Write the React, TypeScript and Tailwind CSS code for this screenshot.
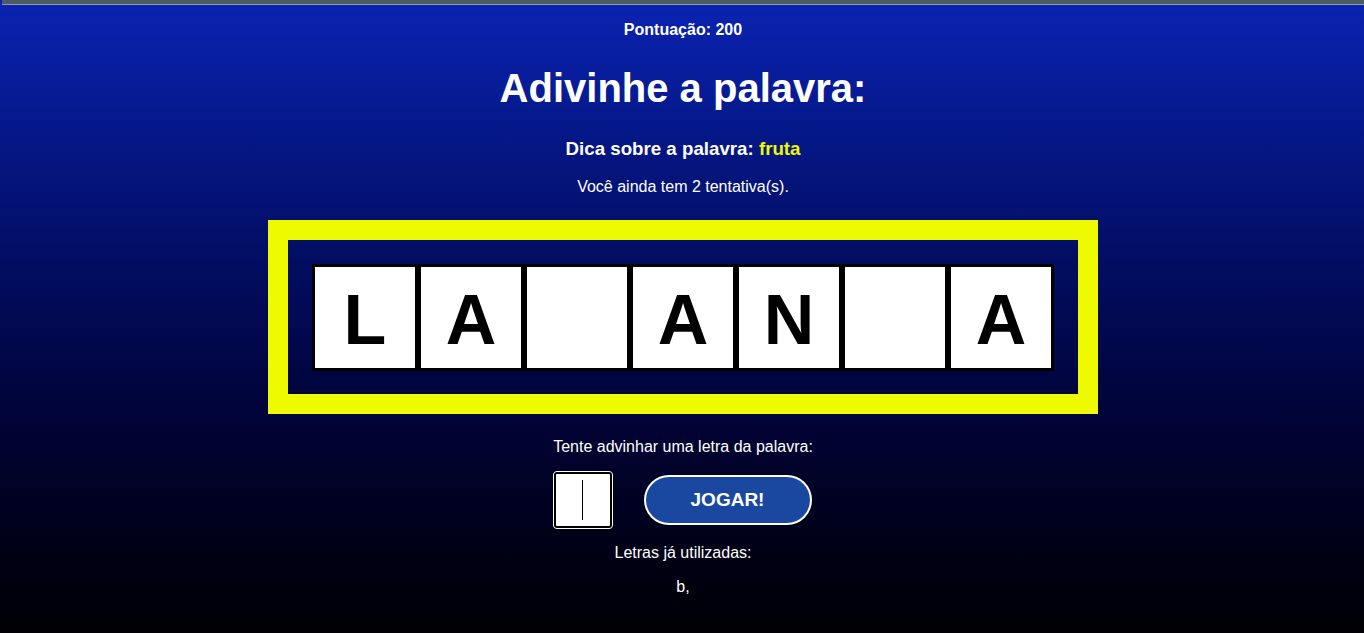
const letters = ["L", "A", "", "A", "N", "", "A"];

export default function App() {
  return (
    <div
      className="min-h-screen w-full pl-[2px] bg-gradient-to-b from-[#0a23b2] to-[#000005] text-white flex flex-col items-center"
      style={{ fontFamily: '"Liberation Sans", Arial, sans-serif' }}
    >
      <div className="w-full h-[4px] bg-[#4c5b63]" />
      <div className="w-full h-px bg-[#8d979c]" />

      <p className="mt-[16px] text-[16px] leading-[18px] font-bold">Pontuação: 200</p>

      <h1 className="mt-[26px] text-[40px] leading-[46px] font-bold">Adivinhe a palavra:</h1>

      <h3 className="mt-[27px] text-[18.72px] leading-[22px] font-bold">
        Dica sobre a palavra: <span className="text-[#eefa00]">fruta</span>
      </h3>

      <p className="mt-[18px] text-[16px] leading-[18px]">Você ainda tem 2 tentativa(s).</p>

      {/* word board */}
      <div className="mt-[24px] w-[830px] h-[194px] border-[20px] border-[#eefa00] flex items-center justify-center">
        <div className="flex">
          {letters.map((l, i) => (
            <div
              key={i}
              className="w-[106px] h-[107px] border-[3px] border-black bg-white flex items-center justify-center pt-[6px] text-black text-[70px] font-bold"
            >
              {l}
            </div>
          ))}
        </div>
      </div>

      <p className="mt-[24px] text-[16px] leading-[18px]">Tente advinhar uma letra da palavra:</p>

      <div className="mt-[15px] mr-[2px] flex items-center gap-[31px]">
        <div className="w-[60px] h-[58px] rounded-[4px] border border-white bg-white">
          <div className="w-full h-full rounded-[3px] border-2 border-black flex items-center justify-center">
            <div className="w-px h-[40px] bg-black" />
          </div>
        </div>
        <button className="w-[168px] h-[50px] rounded-full border-2 border-white bg-[#1a48a1] text-white text-[19px] font-bold">
          JOGAR!
        </button>
      </div>

      <p className="mt-[15px] text-[16px] leading-[18px]">Letras já utilizadas:</p>

      <p className="mt-[16px] text-[16px] leading-[18px]">b,</p>
    </div>
  );
}
